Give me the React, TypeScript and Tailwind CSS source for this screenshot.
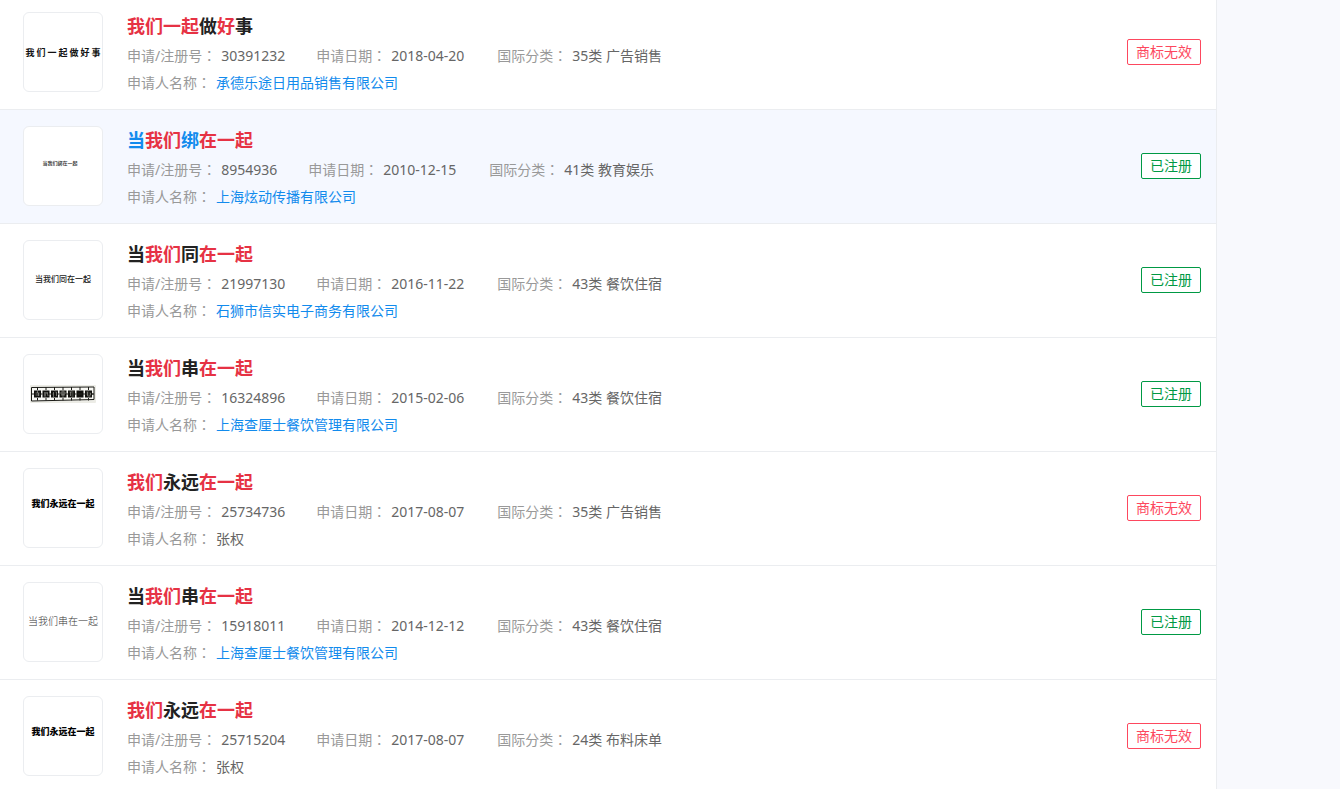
import clsx from "clsx";

type Mark = {
  id: string;
  // text wrapped in * is a search hit
  title: string;
  date: string;
  category: string;
  applicant: string;
  company?: boolean;
  registered: boolean;
  active?: boolean;
  logo: "spaced" | "tiny" | "plain" | "sign" | "heavy" | "light";
};

const marks: Mark[] = [
  { id: "30391232", title: "*我们一起*做*好*事", date: "2018-04-20", category: "35类 广告销售", applicant: "承德乐途日用品销售有限公司", company: true, registered: false, logo: "spaced" },
  { id: "8954936", title: "当*我们*绑*在一起*", date: "2010-12-15", category: "41类 教育娱乐", applicant: "上海炫动传播有限公司", company: true, registered: true, active: true, logo: "tiny" },
  { id: "21997130", title: "当*我们*同*在一起*", date: "2016-11-22", category: "43类 餐饮住宿", applicant: "石狮市信实电子商务有限公司", company: true, registered: true, logo: "plain" },
  { id: "16324896", title: "当*我们*串*在一起*", date: "2015-02-06", category: "43类 餐饮住宿", applicant: "上海查厘士餐饮管理有限公司", company: true, registered: true, logo: "sign" },
  { id: "25734736", title: "*我们*永远*在一起*", date: "2017-08-07", category: "35类 广告销售", applicant: "张权", registered: false, logo: "heavy" },
  { id: "15918011", title: "当*我们*串*在一起*", date: "2014-12-12", category: "43类 餐饮住宿", applicant: "上海查厘士餐饮管理有限公司", company: true, registered: true, logo: "light" },
  { id: "25715204", title: "*我们*永远*在一起*", date: "2017-08-07", category: "24类 布料床单", applicant: "张权", registered: false, logo: "heavy" },
];

const logoStyles = {
  spaced: "gap-0.5 text-[9px] font-bold text-[#111]",
  tiny: "pr-1.5 pb-1.5 text-[5px] font-medium text-[#222]",
  plain: "pb-0.5 text-[8px] font-medium text-[#222]",
  heavy: "pb-2.5 text-[9px] font-black text-black",
  light: "pb-0.5 text-[10px] font-light text-[#333]",
};

// strokes inside each lantern, relative to its centre
const lanterns = [
  "M-2-1h4M0-3v2M-2 1h4M1-1v3",
  "M-2-1h4M-1-2v5M1-2 2 2M-2 1h2",
  "M-1-2v5M1-2h1v4M-2 0h1",
  "M-2-2h4v2h-4ZM0-3v6M-2 1h4",
  "M-2-2h4M-1-2v4M0 0h2M0 2h2",
  "M-2 0h4",
  "M-2-2h2M-2 0h2M-1-2v4M1-1h1v2h-1M-1 2h3",
];

function SignLogo() {
  return (
    <svg width="66" height="18" viewBox="0 0 66 18" fill="none" stroke="#1c1c18">
      <rect width="66" height="18" rx="1" fill="#ecece6" stroke="none" />
      <path d="M1.500 2.500 64 2v12.500L1.500 16Z" fill="#f8f8f4" />
      <path d="M2 9h2M62 9h2" />
      {lanterns.map((strokes, i) => (
        <g key={i} transform={`translate(${7.5 + i * 8.5} 9)`}>
          <path d="M0-7v3M0 4v2.500M3 0h2" />
          <rect x="-3.500" y="-3.500" width="7" height="7" fill="#11110e" stroke="none" />
          <path d={strokes} stroke={i === 5 ? "#33332e" : "#a9a9a2"} strokeWidth="0.600" />
        </g>
      ))}
    </svg>
  );
}

function Thumbnail({ mark }: { mark: Mark }) {
  return (
    <div className="flex size-20 shrink-0 items-center justify-center overflow-hidden rounded-md border border-[#ebedf0] bg-white">
      {mark.logo === "sign" ? (
        <SignLogo />
      ) : (
        <div className={clsx("flex whitespace-nowrap leading-none", logoStyles[mark.logo])}>
          {mark.title.replaceAll("*", "").split("").map((char, i) => (
            <span key={i}>{char}</span>
          ))}
        </div>
      )}
    </div>
  );
}

function Title({ mark }: { mark: Mark }) {
  return (
    <h3 className="text-lg leading-7 font-bold">
      <a href="#" className={mark.active ? "text-[#128bed]" : "text-[#222]"}>
        {mark.title.split("*").map((part, i) =>
          i % 2 ? <em key={i} className="text-[#e63244] not-italic">{part}</em> : part
        )}
      </a>
    </h3>
  );
}

// the TC face centres the full-width colon in its cell
function Label({ text }: { text: string }) {
  return (
    <span className="mr-[5px]">
      {text}
      <span className="font-['Noto_Sans_CJK_TC',sans-serif] leading-none" lang="zh-TW">：</span>
    </span>
  );
}

function MarkRow({ mark }: { mark: Mark }) {
  return (
    <li
      className={clsx(
        "flex items-start border-b border-[#ebedf0] pt-4 pr-[15px] pb-[13px] pl-[23px]",
        mark.active && "bg-[#f5f8ff]"
      )}
    >
      <Thumbnail mark={mark} />
      <div className="ml-6 flex-1">
        <Title mark={mark} />
        <div className="mt-0.5 flex text-sm leading-[27px] text-[#999]">
          <p className="pr-[31px]">
            <Label text="申请/注册号" />
            <span className="text-[#666]">{mark.id}</span>
          </p>
          <p className="w-[181px]">
            <Label text="申请日期" />
            <span className="text-[#666]">{mark.date}</span>
          </p>
          <p>
            <Label text="国际分类" />
            <span className="text-[#666]">{mark.category}</span>
          </p>
        </div>
        <p className="text-sm leading-[27px] text-[#999]">
          <Label text="申请人名称" />
          {mark.company ? (
            <a href="#" className="text-[#128bed]">{mark.applicant}</a>
          ) : (
            <span className="text-[#666]">{mark.applicant}</span>
          )}
        </p>
      </div>
      <div className="flex h-20 items-center">
        <span
          className={clsx(
            "rounded-xs border bg-white px-2 text-sm leading-6",
            mark.registered ? "border-[#009944] text-[#009944]" : "border-[#fd485e] text-[#fd485e]"
          )}
        >
          {mark.registered ? "已注册" : "商标无效"}
        </span>
      </div>
    </li>
  );
}

export default function App() {
  return (
    <div
      lang="zh-CN"
      className="flex h-screen overflow-hidden bg-[#f8f9fd] font-['Noto_Sans','Noto_Sans_CJK_SC',sans-serif]"
    >
      <main className="flex-1 border-r border-[#ebedf0] bg-white">
        <ul className="-mt-1">
          {marks.map((mark) => (
            <MarkRow key={mark.id} mark={mark} />
          ))}
        </ul>
      </main>
      <aside className="w-[123px] shrink-0" />
    </div>
  );
}
